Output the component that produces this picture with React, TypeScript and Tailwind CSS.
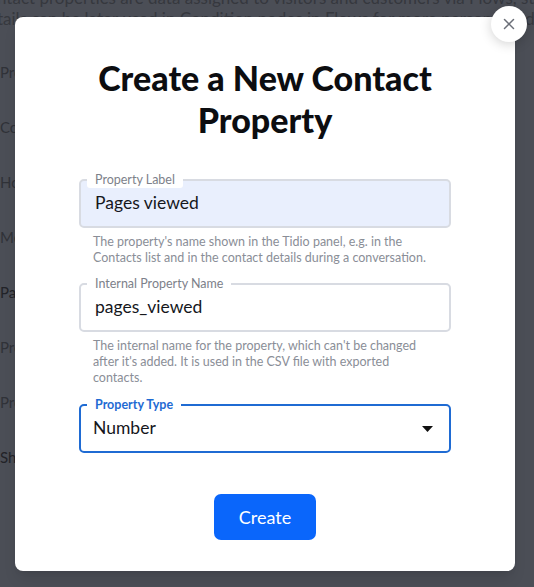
import { X } from 'lucide-react'

const font = { fontFamily: 'Lato, "Noto Sans", sans-serif' }

function Field({
  label,
  value,
  filled,
  active,
  caret,
}: {
  label: string
  value: string
  filled?: boolean
  active?: boolean
  caret?: boolean
}) {
  return (
    <div
      className={`relative flex h-[49px] items-center rounded-[5px] border-2 ${
        active ? 'border-[#1f6bd3] bg-white pl-[12px]' : 'border-[#d8dbe2] pl-[14px]'
      } ${filled ? 'bg-[#e9effd]' : 'bg-white'} pr-[14px]`}
    >
      <span
        className={`absolute -top-[9px] left-[6px] rounded-[3px] bg-white px-[8px] text-[12.5px] leading-[16px] ${
          active ? 'font-bold text-[#1f6bd3]' : 'text-[#7d818a]'
        }`}
      >
        {label}
      </span>
      <span className="flex-1 text-[17.5px] text-[#15171c]">{value}</span>
      {caret && (
        <svg width="11" height="6" viewBox="0 0 11 6" className="mr-[2px]">
          <path d="M0 0h11L5.5 6z" fill="#111" />
        </svg>
      )}
    </div>
  )
}

export default function App() {
  const sideLabels = ['Pro', 'Co', 'Ho', 'Me', 'Pa', 'Pro', 'Pro', 'Sh']

  return (
    <div className="relative h-[587px] w-[534px] overflow-hidden bg-[#4b4e56]" style={font}>
      {/* page behind the overlay */}
      <div className="-mt-[13px] -ml-[3px] whitespace-nowrap text-[17px] leading-[21px] text-[#36383e]">
        <p>ntact properties are data assigned to visitors and customers via Flows, stored in the</p>
        <p>tails can be later used in Condition nodes in Flows for more personalized interaction</p>
      </div>
      <div className="mt-[33px] flex flex-col gap-[35px] text-[15px] leading-[20px] text-[#303238]">
        {sideLabels.map((s, i) => (
          <p key={i} className={s === 'Pa' || s === 'Sh' ? 'text-[#222328]' : ''}>
            {s}
          </p>
        ))}
      </div>

      {/* modal */}
      <div className="absolute left-[15px] top-[17px] flex h-[554px] w-[500px] flex-col items-center rounded-[8px] bg-white px-[64px] pt-[40px] shadow-lg">
        <h1 className="text-center text-[34px] font-black leading-[42px] text-[#0c0d10]">
          Create a New Contact
          <br />
          Property
        </h1>

        <div className="mt-[38px] flex w-full flex-col">
          <Field label="Property Label" value="Pages viewed" filled />
          <p className="mt-[6px] pl-[14px] pr-[4px] text-[12.5px] leading-[16px] text-[#8a8e97]">
            The property's name shown in the Tidio panel, e.g. in the Contacts list and in the contact
            details during a conversation.
          </p>

          <div className="mt-[17px]">
            <Field label="Internal Property Name" value="pages_viewed" />
          </div>
          <p className="mt-[6px] pl-[14px] pr-[26px] text-[12.5px] leading-[16px] text-[#8a8e97]">
            The internal name for the property, which can't be changed after it's added. It is used in
            the CSV file with exported contacts.
          </p>

          <div className="mt-[18px]">
            <Field label="Property Type" value="Number" active caret />
          </div>
        </div>

        <button className="mt-[41px] h-[46px] w-[102px] rounded-[7px] bg-[#0a66fb] text-[18px] text-white">
          Create
        </button>
      </div>

      {/* close button */}
      <button className="absolute left-[491px] top-[6px] flex h-[36px] w-[36px] items-center justify-center rounded-full bg-white shadow-[0_2px_12px_rgba(0,0,0,0.18)]">
        <X className="h-[18px] w-[18px] text-[#6b6f78]" strokeWidth={2} />
      </button>
    </div>
  )
}
